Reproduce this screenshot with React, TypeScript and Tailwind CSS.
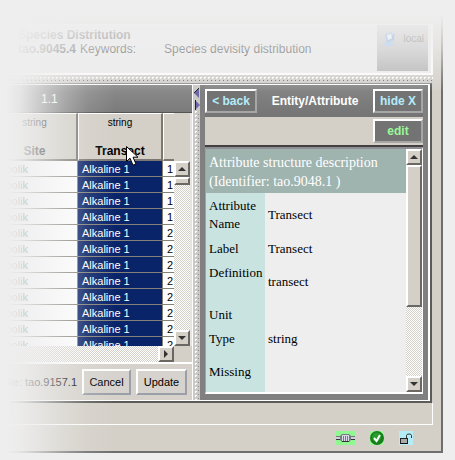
import React from "react";

const SANS = "font-['Liberation_Sans',Arial,sans-serif]";
const SERIF = "font-['Liberation_Serif','Times_New_Roman',serif]";
const TRACK =
  "bg-[repeating-conic-gradient(#d4d0c8_0_25%,#ffffff_0_50%)] bg-[length:2px_2px]";
const RAISED =
  "border-2 border-t-white border-l-white border-r-[#6b6864] border-b-[#6b6864] bg-[#d4d0c8]";
const DARK_BUTTON =
  "h-6 border-2 border-t-white border-l-white border-r-[#a6a6a6] border-b-[#a6a6a6] bg-[#737373] text-center text-[12px] leading-5 font-bold";
const LIGHT_BUTTON =
  "h-[26px] border-2 border-t-white border-l-white border-r-[#9a9fa8] border-b-[#9a9fa8] bg-[#d6d3ce] text-center text-[11px] leading-4 text-black";

const rows = ["1", "1", "1", "1", "2", "2", "2", "2", "2", "2", "2", "2"];

const columns = [
  { name: "Site", width: "w-[78px]", inset: "pr-2" },
  { name: "Transect", width: "w-[85px]", inset: "" },
];

const attributes = [
  { name: "Attribute Name", value: "Transect", size: "h-11", align: "align-middle" },
  { name: "Label", value: "Transect", size: "h-6", align: "align-middle" },
  { name: "Definition", value: "transect", size: "h-[42px]", align: "align-top pt-[3px]" },
  { name: "Unit", value: "", size: "h-6", align: "align-middle" },
  { name: "Type", value: "string", size: "h-6", align: "align-middle" },
  { name: "Missing", value: "", size: "h-[41px]", align: "align-middle" },
];

type Direction = "up" | "down" | "right";

function ArrowButton({ direction }: { direction: Direction }) {
  const points = {
    up: "0,4 4,0 8,4",
    down: "0,0 8,0 4,4",
    right: "2,-2 6,2 2,6",
  }[direction];
  return (
    <button
      type="button"
      aria-label={`Scroll ${direction}`}
      className={`flex size-4 shrink-0 items-center justify-center ${RAISED}`}
    >
      <svg width="8" height="4" viewBox="0 0 8 4" overflow="visible" aria-hidden="true">
        <polygon points={points} fill="#333" />
      </svg>
    </button>
  );
}

function DatasetHeader() {
  return (
    <header className="mr-2 flex h-[51px] items-start border-t border-r-2 border-b-2 border-white bg-[#ededed] pr-[3px]">
      <div className="min-w-0 flex-1 pt-[3px] pl-[18px] text-[12px] leading-[14px] whitespace-nowrap text-[#202020]">
        <p className="font-bold">Species Distritution</p>
        <p className="flex">
          <b>tao.9045.4</b>
          <span className="pl-1">Keywords:</span>
          <span className="pl-7">Species devisity distribution</span>
        </p>
      </div>
      <div className="flex h-[46px] w-[51px] justify-between bg-[#b4b4b4] pt-[6px] pr-1 pl-[6px] text-[10px] leading-4 text-[#333]">
        <svg width="13" height="16" viewBox="0 0 13 16" aria-hidden="true">
          <ellipse cx="6" cy="13" rx="5" ry="2" fill="#7fb2f4" />
          <path d="M2 3 9 1l2 8-7 3z" fill="#4f94f0" />
          <path d="m4 4 4-1 1 4-4 2z" fill="#f4faff" />
          <path d="m9 5 3-3-2 8z" fill="#2a68c4" />
        </svg>
        <span>local</span>
      </div>
    </header>
  );
}

function DataTable() {
  const head =
    "border-t border-l border-t-white border-l-white border-r-2 border-r-[#7c7871] border-b-2 border-b-[#7c7871] bg-[#d4d0c8] p-0 text-center align-top";
  const cell = "h-4 border-b border-[#848178] p-0 pt-px leading-[14px]";
  return (
    <div className="flex h-[233px] bg-[#d4d0c8]">
      <div className="min-w-0 flex-1 overflow-hidden">
        <table className="w-full table-fixed border-separate border-spacing-0 text-[11px]">
          <thead>
            <tr className="h-12">
              {columns.map((column) => (
                <th key={column.name} scope="col" className={`${column.width} ${head}`}>
                  <span className={`block pt-px text-[10px] leading-4 font-normal ${column.inset}`}>string</span>
                  <span className={`block pt-3 text-[12px] leading-4 font-bold ${column.inset}`}>{column.name}</span>
                </th>
              ))}
              <th aria-label="Next column" className="border-t border-b-2 border-l border-t-white border-b-[#7c7871] border-l-white bg-[#d4d0c8]" />
            </tr>
          </thead>
          <tbody>
            {rows.map((value, i) => (
              <tr key={i}>
                <td className={`border-r bg-white ${cell}`}>Toolik</td>
                <td className={`border-r bg-[#0a246a] text-white ${cell}`}>
                  <span className="pl-1">Alkaline 1</span>
                </td>
                <td className={`bg-white ${cell}`}>
                  <span className="pl-1">{value}</span>
                </td>
              </tr>
            ))}
          </tbody>
        </table>
      </div>
      <div className={`mt-12 flex w-4 flex-col justify-between ${TRACK}`}>
        <div>
          <ArrowButton direction="up" />
          <div className={`h-2 w-4 ${RAISED}`} />
        </div>
        <ArrowButton direction="down" />
      </div>
      <div className="w-[2px] bg-[#e6e4e0]" />
    </div>
  );
}

function TablePane() {
  return (
    <section className="relative flex flex-col overflow-hidden border-r border-white">
      <h2 className="h-7 border-b border-[#555] bg-linear-to-b from-[#8c8c8c] to-[#7b7b7b] pl-[41px] text-[12px] leading-7 text-white">
        1.1
      </h2>
      <DataTable />
      <div className="flex h-[18px] border-b-2 border-white bg-[#d4d0c8] pr-[18px]">
        <div className={`flex flex-1 justify-end ${TRACK}`}>
          <ArrowButton direction="right" />
        </div>
      </div>
      <div className="flex h-9 items-center justify-end gap-[5px] bg-[#d6d2cb] pr-[5px] text-[11px]">
        <span className="whitespace-nowrap">file: tao.9157.1</span>
        <button type="button" className={`w-[49px] ${LIGHT_BUTTON}`}>Cancel</button>
        <button type="button" className={`w-[51px] ${LIGHT_BUTTON}`}>Update</button>
      </div>
      <svg
        className="pointer-events-none absolute top-[61px] left-[126px]"
        width="13"
        height="21"
        viewBox="0 0 13 21"
        aria-hidden="true"
      >
        <path d="M.5.5v15l3.500-3.300 3 7 3-1.200-3-6.800h5z" fill="#fff" stroke="#000" />
      </svg>
    </section>
  );
}

function Splitter() {
  return (
    <div className="flex flex-col items-center bg-[#cbc9c5]">
      <svg width="6" height="26" viewBox="0 0 6 26" aria-hidden="true">
        <path d="M5 3v10L0 8z" fill="#6a68a8" />
        <path d="M5 3 0 8" stroke="#222" />
        <path d="M1 15v10l5-5z" fill="#6a68a8" />
        <path d="M1.500 15v10" stroke="#222" />
      </svg>
      <div className="w-1 flex-1 bg-[linear-gradient(135deg,#ffffff_25%,transparent_25%),linear-gradient(315deg,#8c8c8c_25%,transparent_25%)] bg-[length:4px_4px]" />
    </div>
  );
}

function AttributePane() {
  return (
    <section className="flex min-w-0 flex-col bg-[#808080] px-[5px] pb-[6px]">
      <div className="flex h-8 items-center justify-between bg-linear-to-b from-[#868686] to-[#747474]">
        <button type="button" className={`w-[52px] text-[#b4ecfa] ${DARK_BUTTON}`}>&lt; back</button>
        <h2 className="text-[12px] font-bold text-white">Entity/Attribute</h2>
        <button type="button" className={`w-[50px] text-[#b4ecfa] ${DARK_BUTTON}`}>hide X</button>
      </div>
      <div className="flex h-[30px] justify-end border-b-2 border-[#454040] bg-[#d4d0c8] pt-[2px]">
        <button type="button" className={`w-[50px] text-[#98f898] ${DARK_BUTTON}`}>edit</button>
      </div>
      <div className="flex h-[247px] border-t-2 border-r border-b-2 border-l border-t-[#8e8e94] border-r-white border-b-white border-l-[#a0a0aa] bg-[#eee]">
        <div className={`min-w-0 flex-1 overflow-hidden text-black ${SERIF}`}>
          <h3 className="h-11 bg-[#9fb3af] pt-1 pl-[3px] text-[14px] leading-[19px] text-white">
            Attribute structure description
            <br />
            (Identifier: tao.9048.1 )
          </h3>
          <table className="w-full table-fixed border-collapse text-left text-[13px]">
            <tbody>
              {attributes.map((a) => (
                <tr key={a.name} className={a.size}>
                  <th scope="row" className={`w-[59px] bg-[#c9e4e0] p-0 pl-[3px] leading-[18px] font-normal ${a.align}`}>
                    {a.name}
                  </th>
                  <td className="p-0 pl-[3px] align-middle leading-[18px]">{a.value}</td>
                </tr>
              ))}
            </tbody>
          </table>
        </div>
        <div className={`flex w-4 flex-col ${TRACK}`}>
          <ArrowButton direction="up" />
          <div className={`h-[142px] ${RAISED}`} />
          <div className="flex-1" />
          <ArrowButton direction="down" />
        </div>
      </div>
    </section>
  );
}

function StatusBar() {
  return (
    <footer className="flex h-[26px] items-center justify-end gap-[15px] pr-7">
      <svg width="19" height="14" viewBox="0 0 19 14" role="img" aria-label="Network connected">
        <rect width="19" height="14" fill="#90f890" />
        <path d="M0 5h5v4H0zM14 5h5v4h-5z" fill="#d0d0dc" />
        <path d="M0 8.500h5M14 8.500h5" stroke="#333" />
        <path d="M0 5.500h5M14 5.500h5" stroke="#777" />
        <path d="M4 5l2-2h7l2 2v4l-2 2H6L4 9z" fill="#777986" />
        <path d="M6 4.500h7" stroke="#d8d8e4" />
        <path d="M6.500 5v5M8.500 5v5M10.500 5v5M12.500 5v5" stroke="#dcdce8" />
        <path d="M6 10.500h7" stroke="#333" />
      </svg>
      <svg width="14" height="14" viewBox="0 0 14 14" role="img" aria-label="Ready">
        <rect width="14" height="14" fill="#a5f3a0" />
        <circle cx="7" cy="7" r="7" fill="#14801a" />
        <circle cx="6.500" cy="6" r="4.500" fill="#2a9c2e" />
        <path d="m4 7 2.500 3L10 4" fill="none" stroke="#fff" strokeWidth="2" />
      </svg>
      <svg width="14" height="14" viewBox="0 0 14 14" role="img" aria-label="Unlocked">
        <rect width="14" height="14" fill="#b4ecf8" />
        <rect x="1.500" y="7.500" width="7" height="5" fill="#aaa" stroke="#222" />
        <path d="M2 12.500h7" stroke="#111" />
        <path d="M7.500 7V4.500q0-1.500 2.500-1.500t2.500 1.500V7" fill="none" stroke="#333" />
      </svg>
    </footer>
  );
}

export default function App() {
  return (
    <div className={`relative overflow-hidden bg-[#eee] pr-3 pb-[7px] text-black ${SANS}`}>
      <main className="border-r-2 border-b-2 border-[#6e6e6e] bg-[#d4d0c8] pt-6">
        <DatasetHeader />
        <div className="mr-2 flex h-2 items-center bg-[#d2d0cc]">
          <div className="h-1 flex-1 bg-[linear-gradient(135deg,#ffffff_25%,transparent_25%),linear-gradient(315deg,#707070_25%,transparent_25%)] bg-[length:4px_4px]" />
        </div>
        <div className="mr-[9px] border-t border-r-2 border-b-2 border-t-[#909090] border-r-[#5c5c58] border-b-[#5c5c58]">
          <div className="grid grid-cols-[193px_7px_minmax(0,1fr)] border-t border-r-2 border-b border-white">
            <TablePane />
            <Splitter />
            <AttributePane />
          </div>
        </div>
        <div className="mr-2 h-[22px] border-r border-b border-white">
          <div className="h-4 w-3 rounded-br-md border-r border-b border-[#888]" />
        </div>
        <StatusBar />
      </main>
      <div className="pointer-events-none absolute inset-x-0 top-0 h-24 bg-[linear-gradient(to_bottom,#eeeeee_14px,#eeeeeee8_25px,#eeeeeeaa_48px,#eeeeee48_72px,#eeeeee00_92px)]" />
      <div className="pointer-events-none absolute inset-y-0 left-0 w-32 bg-[linear-gradient(to_right,#eeeeee_6px,#eeeeeeea_20px,#eeeeeeac_40px,#eeeeee58_66px,#eeeeee20_88px,#eeeeee00_115px)]" />
    </div>
  );
}
